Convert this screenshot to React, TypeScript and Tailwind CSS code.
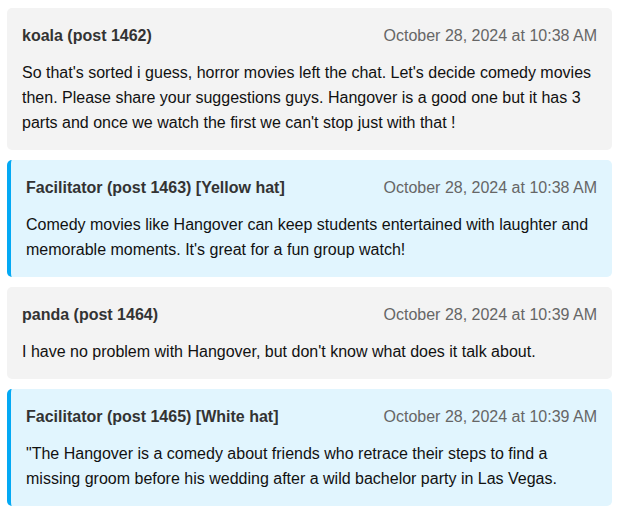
import React from 'react';

type Post = {
  author: string;
  date: string;
  text: string;
  facilitator?: boolean;
};

const posts: Post[] = [
  {
    author: 'koala (post 1462)',
    date: 'October 28, 2024 at 10:38 AM',
    text: "So that's sorted i guess, horror movies left the chat. Let's decide comedy movies then. Please share your suggestions guys. Hangover is a good one but it has 3 parts and once we watch the first we can't stop just with that !",
  },
  {
    author: 'Facilitator (post 1463) [Yellow hat]',
    date: 'October 28, 2024 at 10:38 AM',
    text: "Comedy movies like Hangover can keep students entertained with laughter and memorable moments. It's great for a fun group watch!",
    facilitator: true,
  },
  {
    author: 'panda (post 1464)',
    date: 'October 28, 2024 at 10:39 AM',
    text: "I have no problem with Hangover, but don't know what does it talk about.",
  },
  {
    author: 'Facilitator (post 1465) [White hat]',
    date: 'October 28, 2024 at 10:39 AM',
    text: '"The Hangover is a comedy about friends who retrace their steps to find a missing groom before his wedding after a wild bachelor party in Las Vegas.',
    facilitator: true,
  },
];

export default function App() {
  return (
    <div className="min-h-screen bg-white pt-2 pl-[7px] pr-[5px] font-['Liberation_Sans',Arial,sans-serif] text-[16px]">
      <div className="flex flex-col gap-[10px]">
        {posts.map((p, i) => (
          <div
            key={i}
            className={`rounded-[5px] px-[15px] pt-4 pb-[15px] ${p.facilitator ? 'bg-[#e1f5fe] border-l-4 border-[#03a9f4]' : 'bg-[#f3f3f3]'}`}
          >
            <div className="flex justify-between items-center leading-6 mb-3">
              <span className="font-bold text-[#333]">{p.author}</span>
              <span className="text-[#666]">{p.date}</span>
            </div>
            <p className="leading-[25px] text-[#111]">{p.text}</p>
          </div>
        ))}
      </div>
    </div>
  );
}
